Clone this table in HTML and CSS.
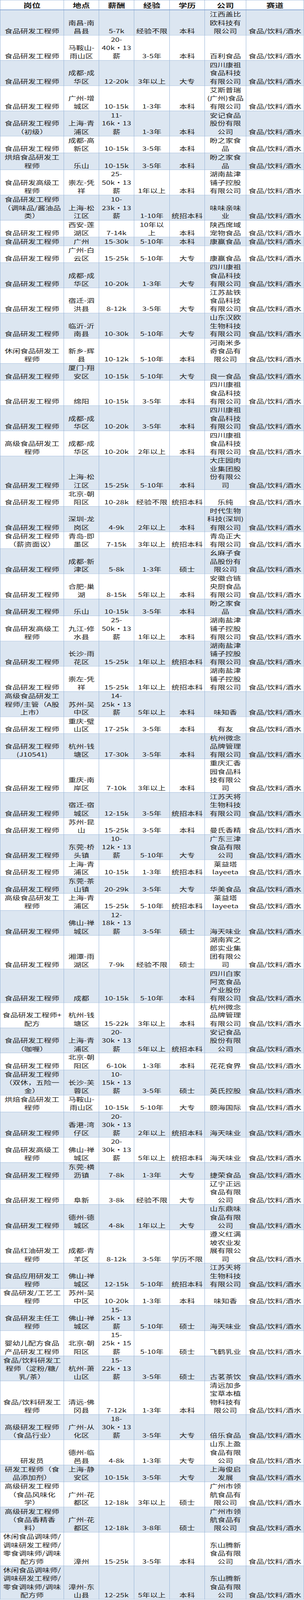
FILE: index.html
```html
<!DOCTYPE html>
<html lang="zh-CN">
<head>
<meta charset="utf-8">
<meta name="viewport" content="width=device-width, initial-scale=1">
<title>食品研发工程师岗位汇总</title>
<link rel="stylesheet" href="styles.css">
</head>
<body>
<table class="jobs">
<colgroup>
<col class="c-job"><col class="c-loc"><col class="c-pay"><col class="c-exp"><col class="c-edu"><col class="c-co"><col class="c-track">
</colgroup>
<thead>
<tr><th>岗位</th><th>地点</th><th>薪酬</th><th>经验</th><th>学历</th><th>公司</th><th>赛道</th></tr>
</thead>
<tbody>
<tr><td>食品研发工程师</td><td>南昌-南<br>昌县</td><td>5-7k</td><td>经验不限</td><td>本科</td><td>江西盖比<br>欧科技有<br>限公司</td><td>食品/饮料/酒水</td></tr>
<tr><td>食品研发工程师</td><td>马鞍山-<br>雨山区</td><td>20-<br>40k·13<br>薪</td><td>3-5年</td><td>本科</td><td>百利食品</td><td>食品/饮料/酒水</td></tr>
<tr><td>食品研发工程师</td><td>成都-成<br>华区</td><td>12-20k</td><td>3年以上</td><td>大专</td><td>四川康祖<br>食品科技<br>有限公司</td><td>食品/饮料/酒水</td></tr>
<tr><td>食品研发工程师</td><td>广州-增<br>城区</td><td>10-15k</td><td>1-3年</td><td>本科</td><td>艾斯普瑞<br>(广州)食品<br>有限公司</td><td>食品/饮料/酒水</td></tr>
<tr><td>食品研发工程师<br>（初级）</td><td>上海-青<br>浦区</td><td>11-<br>16k·13<br>薪</td><td>1-3年</td><td>本科</td><td>安记食品<br>股份有限<br>公司</td><td>食品/饮料/酒水</td></tr>
<tr><td>食品研发工程师</td><td>成都-高<br>新区</td><td>10-15k</td><td>3-5年</td><td>本科</td><td>盼之家食<br>品</td><td>食品/饮料/酒水</td></tr>
<tr><td>烘焙食品研发工<br>程师</td><td>乐山</td><td>10-15k</td><td>3-5年</td><td>本科</td><td>盼之家食<br>品</td><td>食品/饮料/酒水</td></tr>
<tr><td>食品研发高级工<br>程师</td><td>崇左-凭<br>祥</td><td>25-<br>50k·13<br>薪</td><td>1年以上</td><td>本科</td><td>湖南盐津<br>铺子控股<br>有限公司</td><td>食品/饮料/酒水</td></tr>
<tr><td>食品研发工程师<br>（调味品/酱油品<br>类）</td><td>上海-松<br>江区</td><td>10-<br>23k·13<br>薪</td><td>1-10年</td><td>统招本科</td><td>味味亲味<br>业</td><td>食品/饮料/酒水</td></tr>
<tr><td>食品研发工程师</td><td>西安-莲<br>湖区</td><td>7-14k</td><td>10年以<br>上</td><td>本科</td><td>陕西席域<br>宠物食品</td><td>食品/饮料/酒水</td></tr>
<tr><td>食品研发工程师</td><td>广州</td><td>15-30k</td><td>5-10年</td><td>本科</td><td>康赢食品</td><td>食品/饮料/酒水</td></tr>
<tr><td>食品研发工程师</td><td>广州-白<br>云区</td><td>15-25k</td><td>5-10年</td><td>大专</td><td>康赢食品</td><td>食品/饮料/酒水</td></tr>
<tr><td>食品研发工程师</td><td>成都-成<br>华区</td><td>10-20k</td><td>1-3年</td><td>大专</td><td>四川康祖<br>食品科技<br>有限公司</td><td>食品/饮料/酒水</td></tr>
<tr><td>食品研发工程师</td><td>宿迁-泗<br>洪县</td><td>8-12k</td><td>3-5年</td><td>大专</td><td>江苏盐铁<br>食品科技<br>有限公司</td><td>食品/饮料/酒水</td></tr>
<tr><td>食品研发工程师</td><td>临沂-沂<br>南县</td><td>10-30k</td><td>5-10年</td><td>大专</td><td>山东汉欧<br>生物科技<br>有限公司</td><td>食品/饮料/酒水</td></tr>
<tr><td>休闲食品研发工<br>程师</td><td>新乡-辉<br>县</td><td>10-12k</td><td>5-10年</td><td>本科</td><td>河南米多<br>奇食品有<br>限公司</td><td>食品/饮料/酒水</td></tr>
<tr><td>食品研发工程师</td><td>厦门-翔<br>安区</td><td>10-15k</td><td>5-10年</td><td>大专</td><td>良一食品</td><td>食品/饮料/酒水</td></tr>
<tr><td>食品研发工程师</td><td>绵阳</td><td>10-15k</td><td>3-5年</td><td>本科</td><td>四川康祖<br>食品科技<br>有限公司</td><td>食品/饮料/酒水</td></tr>
<tr><td>食品研发工程师</td><td>成都-成<br>华区</td><td>10-20k</td><td>3-5年</td><td>本科</td><td>四川康祖<br>食品科技<br>有限公司</td><td>食品/饮料/酒水</td></tr>
<tr><td>高级食品研发工<br>程师</td><td>成都-成<br>华区</td><td>10-20k</td><td>2年以上</td><td>本科</td><td>四川康祖<br>食品科技<br>有限公司</td><td>食品/饮料/酒水</td></tr>
<tr><td>食品研发工程师</td><td>上海-松<br>江区</td><td>15-25k</td><td>5-10年</td><td>本科</td><td>大庄园肉<br>业集团股<br>份有限公<br>司</td><td>食品/饮料/酒水</td></tr>
<tr><td>食品研发工程师</td><td>北京-朝<br>阳区</td><td>10-28k</td><td>经验不限</td><td>统招本科</td><td>乐纯</td><td>食品/饮料/酒水</td></tr>
<tr><td>食品研发工程师</td><td>深圳-龙<br>岗区</td><td>4-9k</td><td>2年以上</td><td>本科</td><td>时代生物<br>科技(深圳)<br>有限公司</td><td>食品/饮料/酒水</td></tr>
<tr><td>食品研发工程师<br>（薪资面议）</td><td>青岛-即<br>墨区</td><td>7-15k</td><td>3年以上</td><td>统招本科</td><td>青岛正大<br>有限公司</td><td>食品/饮料/酒水</td></tr>
<tr><td>食品研发工程师</td><td>成都-新<br>津区</td><td>5-8k</td><td>1-3年</td><td>硕士</td><td>幺麻子食<br>品股份有<br>限公司</td><td>食品/饮料/酒水</td></tr>
<tr><td>食品研发工程师</td><td>合肥-巢<br>湖</td><td>8-15k</td><td>5年以上</td><td>本科</td><td>安徽合链<br>央厨食品<br>有限公司</td><td>食品/饮料/酒水</td></tr>
<tr><td>食品研发工程师</td><td>乐山</td><td>10-15k</td><td>3-5年</td><td>本科</td><td>盼之家食<br>品</td><td>食品/饮料/酒水</td></tr>
<tr><td>食品研发高级工<br>程师</td><td>九江-修<br>水县</td><td>25-<br>50k·13<br>薪</td><td>1年以上</td><td>本科</td><td>湖南盐津<br>铺子控股<br>有限公司</td><td>食品/饮料/酒水</td></tr>
<tr><td>食品研发工程师</td><td>长沙-雨<br>花区</td><td>15-25k</td><td>1年以上</td><td>统招本科</td><td>湖南盐津<br>铺子控股<br>有限公司</td><td>食品/饮料/酒水</td></tr>
<tr><td>食品研发工程师</td><td>崇左-凭<br>祥</td><td>15-25k</td><td>1年以上</td><td>统招本科</td><td>湖南盐津<br>铺子控股<br>有限公司</td><td>食品/饮料/酒水</td></tr>
<tr><td>高级食品研发工<br>程师/主管（A股<br>上市）</td><td>苏州-吴<br>中区</td><td>14-<br>25k·13<br>薪</td><td>5年以上</td><td>本科</td><td>味知香</td><td>食品/饮料/酒水</td></tr>
<tr><td>食品研发工程师</td><td>重庆-璧<br>山区</td><td>17-25k</td><td>3-5年</td><td>本科</td><td>有友</td><td>食品/饮料/酒水</td></tr>
<tr><td>食品研发工程师<br>(J10541)</td><td>杭州-钱<br>塘区</td><td>17-30k</td><td>3-5年</td><td>本科</td><td>杭州微念<br>品牌管理<br>有限公司</td><td>食品/饮料/酒水</td></tr>
<tr><td>食品研发工程师</td><td>重庆-南<br>岸区</td><td>7-10k</td><td>3年以上</td><td>本科</td><td>重庆汇香<br>园食品科<br>技有限公<br>司</td><td>食品/饮料/酒水</td></tr>
<tr><td>食品研发工程师</td><td>宿迁-宿<br>城区</td><td>12-15k</td><td>3-5年</td><td>统招本科</td><td>江苏天将<br>生物科技<br>有限公司</td><td>食品/饮料/酒水</td></tr>
<tr><td>食品研发工程师</td><td>苏州-昆<br>山</td><td>15-25k</td><td>3-5年</td><td>本科</td><td>曼氏香精</td><td>食品/饮料/酒水</td></tr>
<tr><td>食品研发工程师</td><td>东莞-桥<br>头镇</td><td>10-<br>12k·13<br>薪</td><td>5-10年</td><td>大专</td><td>广东三津<br>食品有限<br>公司</td><td>食品/饮料/酒水</td></tr>
<tr><td>食品研发工程师</td><td>上海-青<br>浦区</td><td>10-15k</td><td>1-3年</td><td>统招本科</td><td>莱益塔<br>layeeta</td><td>食品/饮料/酒水</td></tr>
<tr><td>食品研发工程师</td><td>东莞-茶<br>山镇</td><td>20-29k</td><td>3-5年</td><td>大专</td><td>华美食品</td><td>食品/饮料/酒水</td></tr>
<tr><td>高级食品研发工<br>程师</td><td>上海-青<br>浦区</td><td>15-25k</td><td>5-10年</td><td>统招本科</td><td>莱益塔<br>layeeta</td><td>食品/饮料/酒水</td></tr>
<tr><td>食品研发工程师</td><td>佛山-禅<br>城区</td><td>12-<br>18k·13<br>薪</td><td>3-5年</td><td>硕士</td><td>海天味业</td><td>食品/饮料/酒水</td></tr>
<tr><td>食品研发工程师</td><td>湘潭-雨<br>湖区</td><td>7-9k</td><td>经验不限</td><td>硕士</td><td>湖南宾之<br>郎实业集<br>团有限公<br>司</td><td>食品/饮料/酒水</td></tr>
<tr><td>食品研发工程师</td><td>成都</td><td>10-15k</td><td>5-10年</td><td>本科</td><td>四川白家<br>阿宽食品<br>产业股份<br>有限公司</td><td>食品/饮料/酒水</td></tr>
<tr><td>食品研发工程师+<br>配方</td><td>杭州-钱<br>塘区</td><td>15-22k</td><td>3年以上</td><td>本科</td><td>杭州微念<br>品牌管理<br>有限公司</td><td>食品/饮料/酒水</td></tr>
<tr><td>食品研发工程师<br>（咖喱）</td><td>上海-青<br>浦区</td><td>20-<br>30k·13<br>薪</td><td>5年以上</td><td>统招本科</td><td>安记食品<br>股份有限<br>公司</td><td>食品/饮料/酒水</td></tr>
<tr><td>食品研发工程师</td><td>北京-朝<br>阳区</td><td>6-10k</td><td>1-3年</td><td>本科</td><td>花花食界</td><td>食品/饮料/酒水</td></tr>
<tr><td>食品研发工程师<br>（双休，五险一<br>金）</td><td>长沙-芙<br>蓉区</td><td>10-<br>15k·13<br>薪</td><td>3-5年</td><td>硕士</td><td>英氏控股</td><td>食品/饮料/酒水</td></tr>
<tr><td>烘焙食品研发工<br>程师</td><td>马鞍山-<br>雨山区</td><td>10-15k</td><td>5-10年</td><td>大专</td><td>颐海国际</td><td>食品/饮料/酒水</td></tr>
<tr><td>食品研发工程师</td><td>香港-湾<br>仔区</td><td>20-<br>30k·13<br>薪</td><td>2年以上</td><td>统招本科</td><td>海天味业</td><td>食品/饮料/酒水</td></tr>
<tr><td>食品研发高级工<br>程师</td><td>佛山-禅<br>城区</td><td>20-<br>30k·13<br>薪</td><td>5年以上</td><td>统招本科</td><td>海天味业</td><td>食品/饮料/酒水</td></tr>
<tr><td>食品研发工程师</td><td>东莞-横<br>沥镇</td><td>7-8k</td><td>1-3年</td><td>大专</td><td>捷荣食品</td><td>食品/饮料/酒水</td></tr>
<tr><td>食品研发工程师</td><td>阜新</td><td>3-8k</td><td>经验不限</td><td>大专</td><td>辽宁正远<br>食品有限<br>公司</td><td>食品/饮料/酒水</td></tr>
<tr><td>食品研发工程师</td><td>德州-德<br>城区</td><td>4-8k</td><td>1年以上</td><td>大专</td><td>山东鼎味<br>食品有限<br>公司</td><td>食品/饮料/酒水</td></tr>
<tr><td>食品红油研发工<br>程师</td><td>成都-青<br>羊区</td><td>8-12k</td><td>3-5年</td><td>学历不限</td><td>遵义红满<br>坡农业发<br>展有限公<br>司</td><td>食品/饮料/酒水</td></tr>
<tr><td>食品应用研发工<br>程师</td><td>佛山-禅<br>城区</td><td>12-15k</td><td>5-10年</td><td>统招本科</td><td>江苏天将<br>生物科技<br>有限公司</td><td>食品/饮料/酒水</td></tr>
<tr><td>食品研发/工艺工<br>程师</td><td>苏州-吴<br>中区</td><td>10-20k</td><td>1-3年</td><td>本科</td><td>味知香</td><td>食品/饮料/酒水</td></tr>
<tr><td>食品研发主任工<br>程师</td><td>佛山-禅<br>城区</td><td>15-<br>25k·13<br>薪</td><td>5-10年</td><td>硕士</td><td>海天味业</td><td>食品/饮料/酒水</td></tr>
<tr><td>婴幼儿配方食品<br>产品研发工程师</td><td>北京-朝<br>阳区</td><td>15-<br>25k·15<br>薪</td><td>5-10年</td><td>硕士</td><td>飞鹤乳业</td><td>食品/饮料/酒水</td></tr>
<tr><td>食品/饮料研发工<br>程师（淀粉/糖/<br>乳/茶）</td><td>杭州-萧<br>山区</td><td>15-<br>22k·13<br>薪</td><td>3-5年</td><td>硕士</td><td>古茗茶饮</td><td>食品/饮料/酒水</td></tr>
<tr><td>食品/饮料研发工<br>程师</td><td>清远-佛<br>冈县</td><td>7-12k</td><td>1-3年</td><td>本科</td><td>清远加多<br>宝草本植<br>物科技有<br>限公司</td><td>食品/饮料/酒水</td></tr>
<tr><td>高级研发工程师<br>（食品行业）</td><td>广州-从<br>化区</td><td>18-<br>30k·13<br>薪</td><td>3-5年</td><td>大专</td><td>倍乐食品</td><td>食品/饮料/酒水</td></tr>
<tr><td>研发员</td><td>德州-临<br>邑县</td><td>4-8k</td><td>1-3年</td><td>大专</td><td>山东上盈<br>食品有限<br>公司</td><td>食品/饮料/酒水</td></tr>
<tr><td>研发工程师（食<br>品添加剂）</td><td>上海-静<br>安区</td><td>10-15k</td><td>3-5年</td><td>大专</td><td>上海俊启<br>发展</td><td>食品/饮料/酒水</td></tr>
<tr><td>高级研发工程师<br>（食品风味化<br>学）</td><td>广州-花<br>都区</td><td>12-18k</td><td>3年以上</td><td>硕士</td><td>广州市领<br>航食品有<br>限公司</td><td>食品/饮料/酒水</td></tr>
<tr><td>高级研发工程师<br>（食品香精香<br>料）</td><td>广州-花<br>都区</td><td>12-18k</td><td>3-8年</td><td>硕士</td><td>广州市领<br>航食品有<br>限公司</td><td>食品/饮料/酒水</td></tr>
<tr><td>休闲食品调味师/<br>调味研发工程师/<br>零食调味师/调味<br>配方师</td><td>漳州</td><td>15-25k</td><td>3-5年</td><td>本科</td><td>东山腾新<br>食品有限<br>公司</td><td>食品/饮料/酒水</td></tr>
<tr><td>休闲食品调味师/<br>调味研发工程师/<br>零食调味师/调味<br>配方师</td><td>漳州-东<br>山县</td><td>12-25k</td><td>5年以上</td><td>本科</td><td>东山腾新<br>食品有限<br>公司</td><td>食品/饮料/酒水</td></tr>
</tbody>
</table>
</body>
</html>
```

FILE: styles.css
```css
html {
  -webkit-text-size-adjust: 100%;
  text-size-adjust: 100%;
}

html, body {
  margin: 0;
  padding: 0;
  background: #ffffff;
}

.jobs {
  border-collapse: collapse;
  table-layout: fixed;
  width: 778px;
  font-family: "Noto Sans CJK SC", sans-serif;
  color: #1c1c1c;
}

.c-job { width: 163px; }
.c-loc { width: 90px; }
.c-pay { width: 90px; }
.c-exp { width: 91px; }
.c-edu { width: 90px; }
.c-co { width: 106px; }
.c-track { width: 148px; }

.jobs th {
  height: 32px;
  padding: 0;
  font-size: 22px;
  font-weight: 700;
  line-height: 32px;
  text-align: center;
  vertical-align: middle;
  background: #ffffff;
  border: 1px solid #95b3d7;
  border-bottom: 2px solid #6a91c9;
}

.jobs td {
  padding: 0;
  font-size: 20px;
  line-height: 28.64px;
  text-align: center;
  vertical-align: bottom;
  white-space: nowrap;
  border: 1px solid #95b3d7;
}

.jobs tbody tr:nth-child(odd) td {
  background: #dce6f1;
}

@media (max-height: 5400px) {
  .jobs {
    transform: scaleY(0.74243);
    transform-origin: 0 0;
    margin-bottom: -1420px;
  }
}
```
